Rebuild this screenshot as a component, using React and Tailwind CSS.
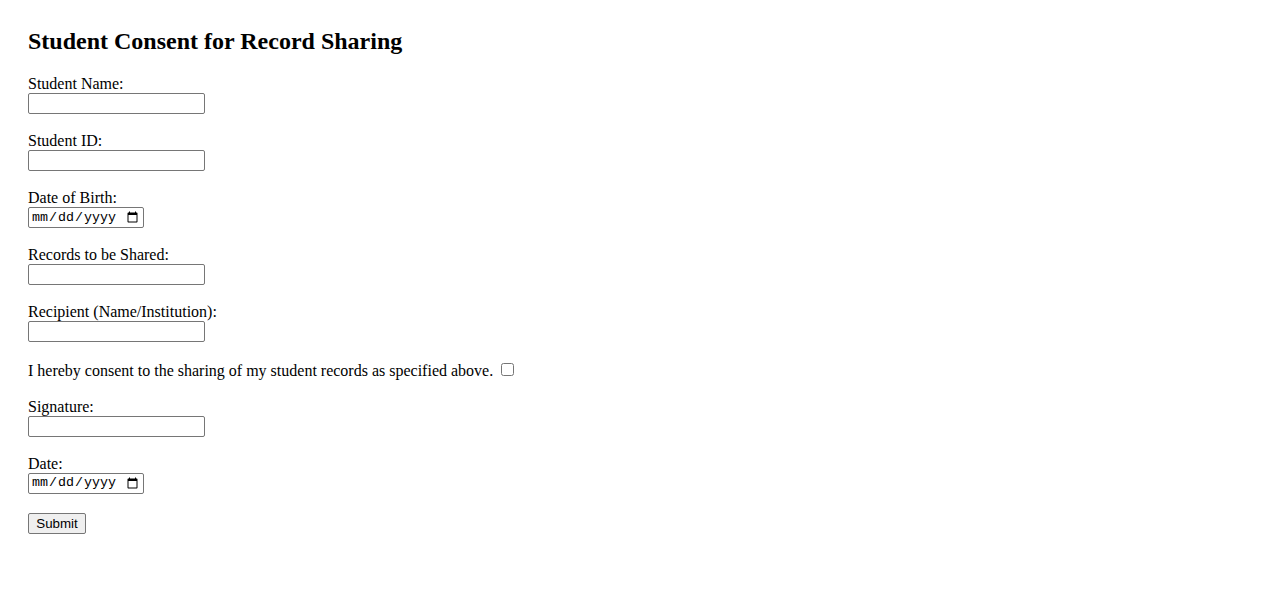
import React from "react";

const serif = { fontFamily: '"Liberation Serif", "Times New Roman", serif' };

function TextField({ label }) {
  return (
    <div className="mb-[17.6px]">
      <label className="block text-[16px] leading-[normal] h-[18.4px]">{label}</label>
      <input
        type="text"
        className="block w-[177px] h-[21px] border border-[#767676] rounded-[2px] bg-white px-[2px] py-[1px] text-[13.33px] [font-family:'Liberation_Sans',Arial,sans-serif] outline-none"
      />
    </div>
  );
}

function DateField({ label, last }) {
  return (
    <div className={last ? "mb-[18.6px]" : "mb-[17.6px]"}>
      <label className="block text-[16px] leading-[normal] h-[18.4px]">{label}</label>
      <input
        type="date"
        className="block w-[116px] h-[21px] border border-[#767676] rounded-[2px] bg-white px-[2px] py-[1px] text-[13.33px] [font-family:'Liberation_Mono',monospace] text-black outline-none"
      />
    </div>
  );
}

export default function App() {
  return (
    <div className="min-h-[601px] bg-white text-black px-[28px] pt-[28px]" style={serif}>
      <h2 className="text-[24px] font-bold leading-[normal] mb-[19.9px]">
        Student Consent for Record Sharing
      </h2>
      <form onSubmit={(e) => e.preventDefault()}>
        <TextField label="Student Name:" />
        <TextField label="Student ID:" />
        <DateField label="Date of Birth:" />
        <TextField label="Records to be Shared:" />
        <TextField label="Recipient (Name/Institution):" />
        <div className="pt-[2px] h-[20.4px] mb-[17.4px] text-[16px] leading-[normal] flex items-center">
          <label>I hereby consent to the sharing of my student records as specified above.</label>
          <input type="checkbox" className="ml-[8px] mt-[-3px] w-[13px] h-[13px]" />
        </div>
        <TextField label="Signature:" />
        <DateField label="Date:" last />
        <button
          type="submit"
          className="block w-[58px] h-[21px] bg-[#efefef] border border-[#767676] rounded-[2px] px-[6px] text-[13.33px] leading-[normal] [font-family:'Liberation_Sans',Arial,sans-serif] text-black"
        >
          Submit
        </button>
      </form>
    </div>
  );
}
